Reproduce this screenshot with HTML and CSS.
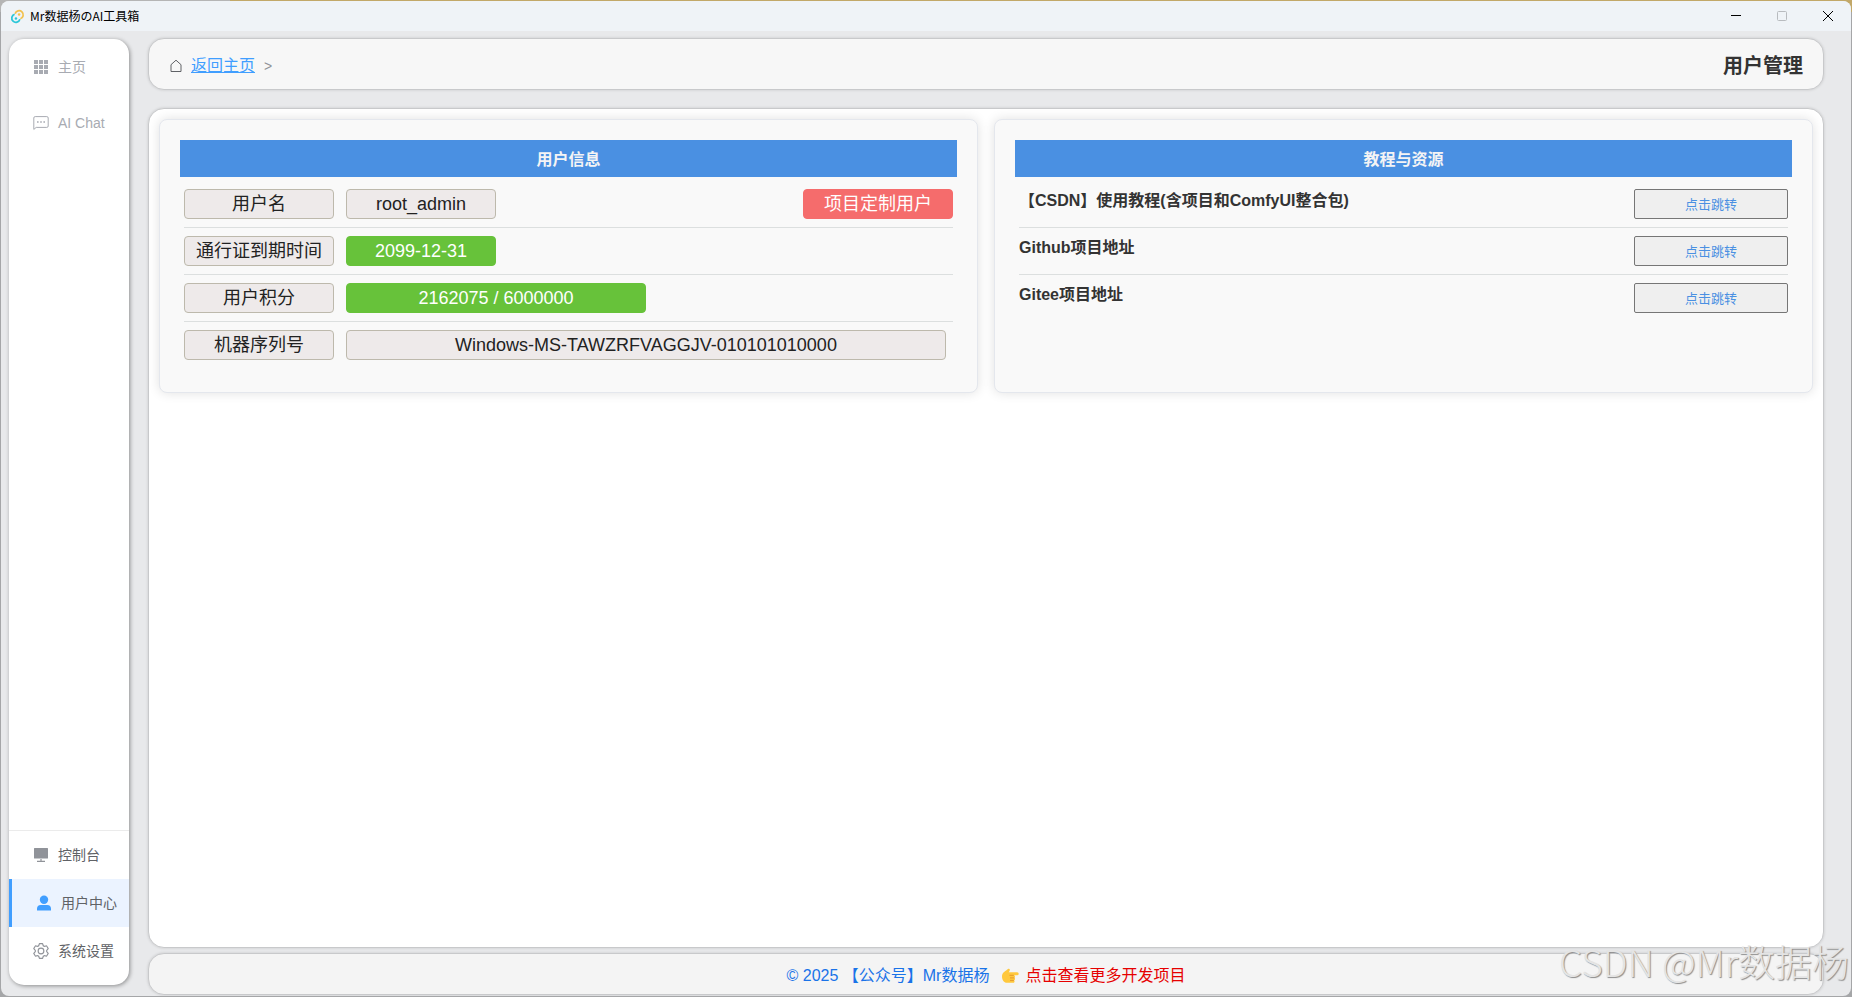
FILE: index.html
```html
<!DOCTYPE html>
<html lang="zh-CN">
<head>
<meta charset="utf-8">
<title>Mr数据杨のAI工具箱</title>
<link rel="stylesheet" href="styles.css">
</head>
<body>
<div class="window">
  <header class="titlebar">
    <svg class="app-logo" viewBox="0 0 24 24" fill="none" aria-hidden="true">
      <path d="M8.200 7.600A6.600 6.600 0 1 1 16.600 15.600" stroke="#f2c14e" stroke-width="2.800"/>
      <path d="M15.800 16.400A6.600 6.600 0 1 1 7.400 8.400" stroke="#2cc7d8" stroke-width="2.800"/>
      <circle cx="14.500" cy="8.800" r="2" fill="#f2c14e"/>
      <circle cx="9.500" cy="15.200" r="2" fill="#2cc7d8"/>
    </svg>
    <span class="app-name">Mr数据杨のAI工具箱</span>
    <div class="window-controls">
      <button class="window-btn" type="button" aria-label="最小化"><svg viewBox="0 0 12 12"><path d="M1 5.500h10"/></svg></button>
      <button class="window-btn" type="button" aria-label="最大化" disabled><svg viewBox="0 0 12 12"><rect x="1.500" y="1.500" width="9" height="9" rx="1"/></svg></button>
      <button class="window-btn" type="button" aria-label="关闭"><svg viewBox="0 0 12 12"><path d="M1 1l10 10M11 1L1 11"/></svg></button>
    </div>
  </header>

  <div class="app">
    <nav class="sidebar">
      <div class="menu menu-top">
        <a class="menu-item" href="#home">
          <svg class="icon" viewBox="0 0 16 16" fill="currentColor" aria-hidden="true"><path d="M1 1h4v4H1zM6 1h4v4H6zM11 1h4v4h-4zM1 6h4v4H1zM6 6h4v4H6zM11 6h4v4h-4zM1 11h4v4H1zM6 11h4v4H6zM11 11h4v4h-4z"/></svg>
          <span>主页</span>
        </a>
        <a class="menu-item" href="#chat">
          <svg class="icon" viewBox="0 0 16 16" fill="none" stroke="currentColor" aria-hidden="true"><path d="M.8 14.400V3a1.400 1.400 0 0 1 1.400-1.400h11.600A1.400 1.400 0 0 1 15.200 3v8a1.400 1.400 0 0 1-1.400 1.400H3.200z"/><path d="M4 7h1.600M7.200 7h1.600M10.400 7H12" stroke-width="1.600"/></svg>
          <span>AI Chat</span>
        </a>
      </div>
      <div class="menu menu-bottom">
        <a class="menu-item" href="#console">
          <svg class="icon" viewBox="0 0 16 16" fill="currentColor" aria-hidden="true"><path d="M1.600 1h12.800a.6.6 0 0 1 .6.6v9.300a.6.6 0 0 1-.6.6H1.600a.6.6 0 0 1-.6-.6V1.600A.6.6 0 0 1 1.600 1zM7.400 12h1.200v1.700h3.400V15H4v-1.300h3.400z"/></svg>
          <span>控制台</span>
        </a>
        <a class="menu-item active" href="#user" aria-current="page">
          <svg class="icon" viewBox="0 0 16 16" fill="currentColor" aria-hidden="true"><circle cx="8" cy="4.700" r="4.200"/><path d="M1 15.500v-1.700a3.800 3.800 0 0 1 3.800-3.800h6.400a3.800 3.800 0 0 1 3.800 3.800v1.700z"/></svg>
          <span>用户中心</span>
        </a>
        <a class="menu-item" href="#settings">
          <svg class="icon" viewBox="64 64 896 896" fill="currentColor" aria-hidden="true"><path d="M600.704 64a32 32 0 0 1 30.464 22.208l35.200 109.376c14.784 7.232 28.928 15.360 42.432 24.512l112.384-24.192a32 32 0 0 1 34.432 15.360L944.320 364.800a32 32 0 0 1-4.032 37.504l-77.120 85.120a357.120 357.120 0 0 1 0 49.024l77.120 85.248a32 32 0 0 1 4.032 37.504l-88.704 153.600a32 32 0 0 1-34.432 15.296L708.800 803.904c-13.440 9.088-27.648 17.280-42.368 24.512l-35.264 109.376A32 32 0 0 1 600.704 960H423.296a32 32 0 0 1-30.464-22.208L357.696 828.480a351.616 351.616 0 0 1-42.560-24.640l-112.320 24.256a32 32 0 0 1-34.432-15.360L79.680 659.200a32 32 0 0 1 4.032-37.504l77.120-85.248a357.120 357.120 0 0 1 0-48.896l-77.120-85.248A32 32 0 0 1 79.680 364.800l88.704-153.600a32 32 0 0 1 34.432-15.296l112.320 24.256c13.568-9.152 27.776-17.408 42.560-24.640l35.200-109.312A32 32 0 0 1 423.232 64H600.640zm-23.424 64H446.720l-36.352 113.088-24.512 11.968a294.113 294.113 0 0 0-34.816 20.096l-22.656 15.360-116.224-25.088-65.280 113.152 79.680 88.192-1.920 27.136a293.120 293.120 0 0 0 0 40.192l1.920 27.136-79.808 88.192 65.344 113.152 116.224-25.024 22.656 15.296a294.113 294.113 0 0 0 34.816 20.096l24.512 11.968L446.720 896h130.688l36.480-113.152 24.448-11.904a288.282 288.282 0 0 0 34.752-20.096l22.592-15.296 116.288 25.024 65.280-113.152-79.744-88.192 1.920-27.136a293.120 293.120 0 0 0 0-40.256l-1.920-27.136 79.808-88.128-65.344-113.152-116.288 24.960-22.592-15.232a287.616 287.616 0 0 0-34.752-20.096l-24.448-11.904L577.344 128zM512 320a192 192 0 1 1 0 384 192 192 0 0 1 0-384zm0 64a128 128 0 1 0 0 256 128 128 0 0 0 0-256z"/></svg>
          <span>系统设置</span>
        </a>
      </div>
    </nav>

    <div class="content">
      <div class="page-header">
        <div class="breadcrumb">
          <svg class="home-icon" viewBox="0 0 12 14" fill="none" stroke="currentColor" aria-hidden="true"><path d="M1 12.500V5.700L6 1.200l5 4.500v6.800z"/></svg>
          <a class="back-link" href="#home">返回主页</a>
          <span class="separator">&gt;</span>
        </div>
        <h1 class="page-title">用户管理</h1>
      </div>

      <main class="panel">
        <section class="card">
          <h2 class="card-title">用户信息</h2>
          <div class="rows">
            <div class="row">
              <span class="tag">用户名</span>
              <span class="tag">root_admin</span>
              <span class="tag danger">项目定制用户</span>
            </div>
            <div class="row">
              <span class="tag">通行证到期时间</span>
              <span class="tag success">2099-12-31</span>
            </div>
            <div class="row">
              <span class="tag">用户积分</span>
              <span class="tag success wide">2162075 / 6000000</span>
            </div>
            <div class="row">
              <span class="tag">机器序列号</span>
              <span class="tag full">Windows-MS-TAWZRFVAGGJV-010101010000</span>
            </div>
          </div>
        </section>

        <section class="card">
          <h2 class="card-title">教程与资源</h2>
          <div class="rows">
            <div class="row resource">
              <span class="resource-name" id="res-csdn">【CSDN】使用教程(含项目和ComfyUI整合包)</span>
              <button class="jump" type="button" aria-describedby="res-csdn">点击跳转</button>
            </div>
            <div class="row resource">
              <span class="resource-name" id="res-github">Github项目地址</span>
              <button class="jump" type="button" aria-describedby="res-github">点击跳转</button>
            </div>
            <div class="row resource">
              <span class="resource-name" id="res-gitee">Gitee项目地址</span>
              <button class="jump" type="button" aria-describedby="res-gitee">点击跳转</button>
            </div>
          </div>
        </section>
      </main>

      <footer class="footer">
        <a class="copyright" href="#about">© 2025 【公众号】Mr数据杨</a>
        <svg class="hand" viewBox="0 0 18 16" aria-hidden="true">
          <path d="M1 8.500C1 5 3.500 3.500 5.500 2.200 6.600 1.400 7.300.6 8.300.9c1 .4.6 2-.6 3.400h8.500a1.500 1.500 0 0 1 0 3h-3.400a1.400 1.400 0 0 1 .6 2.500 1.400 1.400 0 0 1-.4 2.500 1.400 1.400 0 0 1-1 2.500H6C3 14.800 1 12 1 8.500z" fill="#ffc83d"/>
          <path d="M8.500 7.300h4.300M9 9.900h4.400M9 12.400h3.900" stroke="#e59a2e" fill="none"/>
        </svg>
        <a class="more" href="#projects">点击查看更多开发项目</a>
      </footer>
    </div>
  </div>
</div>
<div class="watermark">CSDN @Mr数据杨</div>
</body>
</html>
```

FILE: styles.css
```css
* {
  box-sizing: border-box;
}

body {
  margin: 0;
  height: 100vh;
  padding: 1px;
  overflow: hidden;
  background: linear-gradient(90deg, #b5b5b5 230px, #c2a868 230px) top / 100% 12px no-repeat #a5a6a8;
  font-family: "Liberation Sans", "Noto Sans CJK SC", sans-serif;
  font-size: 16px;
  color: #303133;
}

a {
  text-decoration: none;
}

h1,
h2 {
  margin: 0;
}

.window {
  height: 100%;
  display: flex;
  flex-direction: column;
  border-radius: 8px;
  overflow: hidden;
  background: #e8e9eb;
}

.titlebar {
  flex: none;
  height: 30px;
  display: flex;
  align-items: center;
  padding-left: 9px;
  gap: 5px;
  background: #eff3f7;
}

.app-logo {
  width: 15px;
  height: 15px;
}

.app-name {
  font: 12px/16px "Noto Sans CJK SC", sans-serif;
  padding-bottom: 1px;
  color: #000;
}

.window-controls {
  display: flex;
  height: 100%;
  margin-left: auto;
}

.window-btn {
  width: 46px;
  padding: 0 0 1px;
  border: 0;
  background: none;
  display: flex;
  align-items: center;
  justify-content: center;
  color: #000;
}

.window-btn:disabled {
  color: #b8bbbf;
}

.window-btn svg {
  width: 12px;
  height: 12px;
  fill: none;
  stroke: currentColor;
}

.app {
  flex: 1;
  min-height: 0;
  display: flex;
  gap: 19px;
  padding: 7px 27px 1px 8px;
}

.sidebar {
  flex: none;
  width: 120px;
  margin: 1px 0 10px;
  padding-bottom: 10px;
  display: flex;
  flex-direction: column;
  justify-content: space-between;
  background: #fff;
  border-radius: 15px;
  box-shadow: 1px 1px 4px rgba(0, 0, 0, 0.4);
}

.menu {
  display: flex;
  flex-direction: column;
  font-size: 14px;
}

.menu-item {
  height: 48px;
  padding-left: 24px;
  display: flex;
  align-items: center;
  gap: 9px;
  color: #606266;
  line-height: 20px;
  white-space: nowrap;
}

.menu-top .menu-item {
  height: 56px;
  color: #a8abb2;
}

.menu-bottom {
  border-top: 1px solid #ebebeb;
}

.menu-item .icon {
  width: 16px;
  height: 16px;
  color: #909399;
}

.menu-top .icon {
  color: #a8abb2;
}

.menu-item.active {
  border-left: 3px solid #409eff;
  background: #ebf3ff;
}

.menu-item.active .icon {
  color: #409eff;
}

.content {
  flex: 1;
  min-width: 0;
  display: flex;
  flex-direction: column;
}

.page-header,
.panel,
.footer {
  border: 1px solid #c8c9cb;
  border-radius: 16px;
  box-shadow: 0 0 3px rgba(0, 0, 0, 0.15);
}

.page-header {
  flex: none;
  height: 52px;
  margin-bottom: 18px;
  padding: 3px 20px 0;
  display: flex;
  align-items: center;
  justify-content: space-between;
  background: #f7f7f7;
}

.breadcrumb {
  display: flex;
  align-items: center;
  gap: 9px;
  line-height: 24px;
  color: #909399;
}

.home-icon {
  width: 12px;
  height: 14px;
  margin-left: 1px;
  color: #606266;
}

.back-link {
  color: #409eff;
  text-decoration: underline;
}

.separator {
  font-size: 14px;
}

.page-title {
  font-size: 20px;
  line-height: 28px;
  color: #333;
}

.panel {
  flex: 1;
  min-height: 0;
  margin-bottom: 5px;
  padding: 10px;
  display: flex;
  align-items: flex-start;
  gap: 16px;
  background: #fff;
}

.card {
  flex: 1;
  align-self: flex-start;
  min-height: 274px;
  padding: 20px;
  border: 1px solid #e4e7ed;
  border-radius: 8px;
  background: #f9f9f9;
  box-shadow: 0 0 12px rgba(0, 0, 0, 0.12);
}

.card-title {
  padding: 9px 0 7px;
  font-size: 16px;
  line-height: 21px;
  text-align: center;
  color: #f4f4f5;
  background: #4a90e2;
}

.rows {
  padding: 4px 4px 0;
}

.row {
  display: flex;
  gap: 12px;
  padding: 8px 0;
}

.row + .row {
  border-top: 1px solid #dcdfdf;
}

.tag {
  width: 150px;
  height: 30px;
  border: 1px solid #bdb9ac;
  border-radius: 4px;
  background: #eeeaea;
  font-size: 18px;
  line-height: 28px;
  text-align: center;
  white-space: nowrap;
  color: #222;
}

.tag.wide {
  width: 300px;
}

.tag.full {
  width: 600px;
}

.tag.success {
  border-color: #67c23a;
  background: #67c23a;
  color: #fff;
}

.tag.danger {
  margin-left: auto;
  border-color: #f56c6c;
  background: #f56c6c;
  color: #fff;
}

.resource {
  justify-content: space-between;
}

.resource-name {
  font-weight: bold;
  line-height: 24px;
  color: #333;
}

.jump {
  width: 154px;
  height: 30px;
  padding: 2px 0 0;
  border: 1px solid #767676;
  border-radius: 2px;
  background: #efefef;
  font: 13px/20px "Liberation Sans", "Noto Sans CJK SC", sans-serif;
  color: #4a90e2;
}

.footer {
  flex: none;
  height: 42px;
  padding-top: 4px;
  display: flex;
  align-items: center;
  justify-content: center;
  line-height: 24px;
  background: #f4f4f4;
}

.copyright {
  color: #1a73e8;
}

.hand {
  width: 18px;
  height: 16px;
  margin: 0 6px 0 12px;
}

.more {
  color: #e60000;
}

.watermark {
  position: absolute;
  right: 3px;
  bottom: 10px;
  font: 300 37px/52px "Noto Sans CJK SC", sans-serif;
  color: #e4e4e4;
  text-shadow: 1px 1px 1px #8c8c8c;
  pointer-events: none;
}
```
